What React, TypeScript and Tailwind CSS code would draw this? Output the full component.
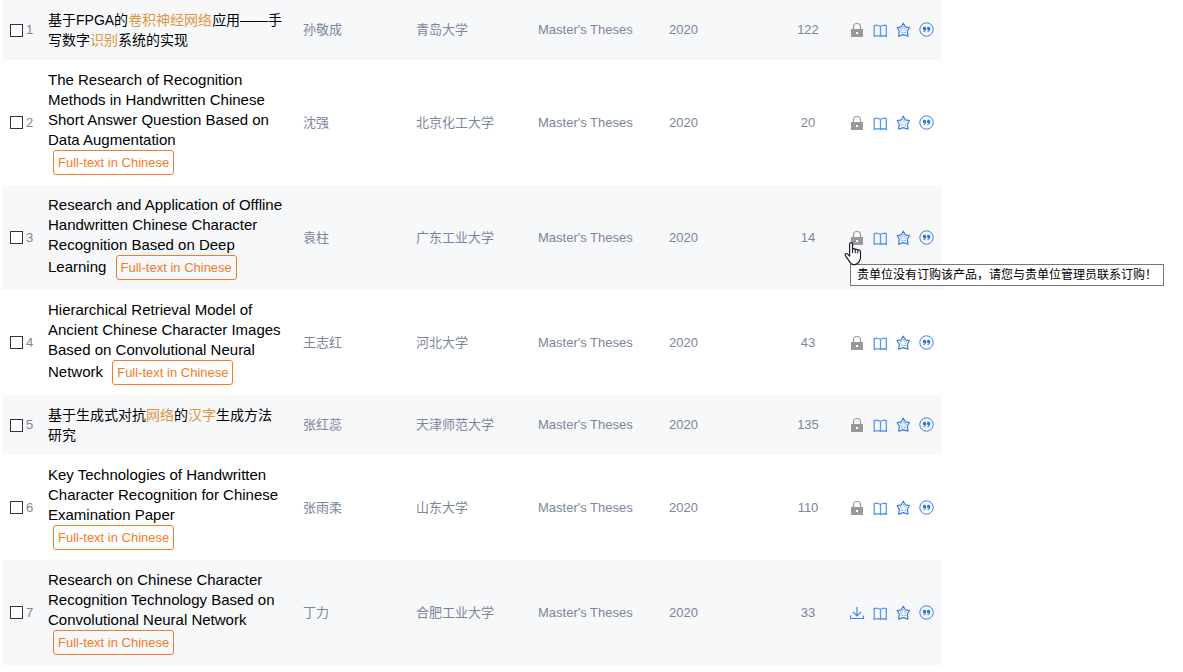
import type { ReactNode } from "react";

type Thesis = {
  id: number;
  lines: ReactNode[];
  translated?: boolean;
  badgeOnOwnLine?: boolean;
  author: string;
  school: string;
  downloads: number;
  open?: boolean;
  hint?: string;
};

function Hit({ children }: { children: ReactNode }) {
  return <em className="not-italic text-[#e0953f]">{children}</em>;
}

const theses: Thesis[] = [
  {
    id: 1,
    lines: [
      <>基于FPGA的<Hit>卷积神经网络</Hit>应用——手</>,
      <>写数字<Hit>识别</Hit>系统的实现</>,
    ],
    author: "孙敬成",
    school: "青岛大学",
    downloads: 122,
  },
  {
    id: 2,
    lines: [
      "The Research of Recognition",
      "Methods in Handwritten Chinese",
      "Short Answer Question Based on",
      "Data Augmentation",
    ],
    translated: true,
    badgeOnOwnLine: true,
    author: "沈强",
    school: "北京化工大学",
    downloads: 20,
  },
  {
    id: 3,
    lines: [
      "Research and Application of Offline",
      "Handwritten Chinese Character",
      "Recognition Based on Deep",
      "Learning",
    ],
    translated: true,
    author: "袁柱",
    school: "广东工业大学",
    downloads: 14,
    hint: "贵单位没有订购该产品，请您与贵单位管理员联系订购！",
  },
  {
    id: 4,
    lines: [
      "Hierarchical Retrieval Model of",
      "Ancient Chinese Character Images",
      "Based on Convolutional Neural",
      "Network",
    ],
    translated: true,
    author: "王志红",
    school: "河北大学",
    downloads: 43,
  },
  {
    id: 5,
    lines: [
      <>基于生成式对抗<Hit>网络</Hit>的<Hit>汉字</Hit>生成方法</>,
      "研究",
    ],
    author: "张红蕊",
    school: "天津师范大学",
    downloads: 135,
  },
  {
    id: 6,
    lines: [
      "Key Technologies of Handwritten",
      "Character Recognition for Chinese",
      "Examination Paper",
    ],
    translated: true,
    badgeOnOwnLine: true,
    author: "张雨柔",
    school: "山东大学",
    downloads: 110,
  },
  {
    id: 7,
    lines: [
      "Research on Chinese Character",
      "Recognition Technology Based on",
      "Convolutional Neural Network",
    ],
    translated: true,
    badgeOnOwnLine: true,
    author: "丁力",
    school: "合肥工业大学",
    downloads: 33,
    open: true,
  },
];

function LockIcon() {
  return (
    <svg viewBox="0 0 14 16" className="h-4 w-3.5" aria-hidden="true">
      <path d="M3.500 7.500V4.500C3.500 2.500 5 1.500 7 1.500s3.500 1 3.500 3v3" fill="none" stroke="#999" strokeWidth="1.200" />
      <path d="M1 7h12v8H1z" fill="#999" />
      <path d="M6 10h2v2H6z" fill="#fff" />
    </svg>
  );
}

function DownloadIcon() {
  return (
    <svg viewBox="0 0 14 16" className="h-4 w-3.5" fill="none" stroke="#4285ea" strokeWidth="1.2" aria-hidden="true">
      <path d="M7 2v9M3 7l4 4 4-4M.6 10.5v3h12.8v-3" />
    </svg>
  );
}

function BookIcon() {
  return (
    <svg viewBox="0 0 14 16" className="h-4 w-3.5" fill="none" stroke="#5a96f2" strokeWidth="1.300" aria-hidden="true">
      <path d="M7.500 4.500C6 3.200 2.500 3 1.200 3.600v10.700c1.800-.7 4.800-.6 6.300.2 1.500-.8 4-.9 5.800-.2V3.600c-1.300-.6-4.300-.4-5.800.9zM7.500 4.500v10" />
    </svg>
  );
}

function StarIcon() {
  return (
    <svg viewBox="0 0 14 16" className="h-4 w-3.5" fill="none" stroke="#3b7de6" strokeLinejoin="round" aria-hidden="true">
      <path strokeWidth="1.2" d="M7.300 1.200l2 3.600 4.100.9-2.100 3.500.7 4.900-4.700-1.500-4.700 1.500.7-4.900L1.200 5.700l4.100-.9z" />
      <path strokeWidth="0.8" strokeDasharray="1 1" d="M7.300 4.500l1.100 2 2.200.5-1.400 1.700.2 2.300-2.100-.8-2.100.8.2-2.300L4 7l2.200-.5z" />
    </svg>
  );
}

function QuoteIcon() {
  return (
    <svg viewBox="0 0 15 16" className="h-4 w-[15px] shrink-0" aria-hidden="true">
      <circle cx="7.5" cy="7.5" r="6.700" fill="none" stroke="#3b7de6" strokeWidth="1" />
      <path
        fill="#2f74e3"
        d="M5.400 4.800c1.100 0 1.800.8 1.800 2 0 1.700-1.100 3-2.800 3.500l-.3-.7c.9-.4 1.400-.9 1.500-1.600-1.100.1-1.800-.6-1.800-1.600 0-.9.700-1.600 1.600-1.600zM9.500 4.800c1.100 0 1.800.8 1.800 2 0 1.700-1.100 3-2.800 3.500l-.3-.7c.9-.4 1.400-.9 1.500-1.600-1.100.1-1.800-.6-1.800-1.600 0-.9.700-1.600 1.600-1.600z"
      />
    </svg>
  );
}

function HandCursor() {
  return (
    <svg viewBox="0 0 18 25" className="absolute top-3 -left-1.5 z-20 h-6 w-4.5" aria-hidden="true">
      <path
        d="M5.500 2.200c0-.9.600-1.500 1.500-1.500s1.500.6 1.500 1.500v5.600c.3-1.300 2.600-1.300 2.800.3.400-1 2.500-.8 2.700.7.600-.9 2.800-.6 2.800 1.200v6.200c0 1.600-.5 2.700-1.200 3.900-.8 1.700-2.400 3.400-4.800 3.400H9.600c-1.700 0-2.900-.9-3.700-2.300L1 13.900c-.7-1.500 1-2.500 2.200-1.500l2.300 2.400z"
        fill="#fff"
        stroke="#151525"
        strokeWidth="1.200"
        strokeLinejoin="round"
      />
      <path d="M8.500 7.500v4M11.300 8v3.700M14 8.800v3" fill="none" stroke="#151525" strokeWidth="1.100" />
    </svg>
  );
}

const iconButton = "flex w-3.5 cursor-pointer";

function Actions({ thesis }: { thesis: Thesis }) {
  return (
    <div className="relative flex gap-[9px]">
      <button type="button" aria-label={thesis.open ? "Download" : "Locked"} className={iconButton}>
        {thesis.open ? <DownloadIcon /> : <LockIcon />}
      </button>
      <button type="button" aria-label="Read online" className={iconButton}>
        <BookIcon />
      </button>
      <button type="button" aria-label="Add to favourites" className={iconButton}>
        <StarIcon />
      </button>
      <button type="button" aria-label="Cite" className={iconButton}>
        <QuoteIcon />
      </button>
      {thesis.hint && (
        <>
          <HandCursor />
          <div
            role="tooltip"
            className="absolute top-[34px] left-0 z-10 border border-[#767676] bg-white px-1.5 text-xs leading-5 whitespace-nowrap text-black"
          >
            {thesis.hint}
          </div>
        </>
      )}
    </div>
  );
}

function Title({ thesis }: { thesis: Thesis }) {
  const size = thesis.translated ? "text-[15px]/5" : "text-sm/5";
  return (
    <div className={`${size} whitespace-nowrap`}>
      <a href="#" className="text-black">
        {thesis.lines.map((line, i) => (
          <span key={i}>
            {i > 0 && <br />}
            {line}
          </span>
        ))}
      </a>
      {thesis.translated && (
        <>
          {thesis.badgeOnOwnLine ? <br /> : " "}
          <span className="ml-[5px] inline-block rounded-[3px] border border-[#f97a26] px-1 text-[13px]/[23px] text-[#f97a26]">
            Full-text in Chinese
          </span>
        </>
      )}
    </div>
  );
}

export default function App() {
  return (
    <main className="min-h-screen bg-white pl-0.5 font-['Liberation_Sans','Noto_Sans_CJK_SC',sans-serif]">
      <table className="w-full max-w-[940px] table-fixed border-collapse text-[13px] leading-5 text-[#7b869a]">
        <colgroup>
          <col className="w-[46px]" />
          <col className="w-[255px]" />
          <col className="w-[113px]" />
          <col className="w-[122px]" />
          <col className="w-[131px]" />
          <col className="w-[103px]" />
          <col className="w-[72px]" />
          <col className="w-[98px]" />
        </colgroup>
        <tbody>
          {theses.map((thesis) => (
            <tr key={thesis.id} className="odd:bg-[#f6f8fa]">
              <td className="py-2.5 pl-2">
                <label className="flex items-center gap-[3px]">
                  <input
                    type="checkbox"
                    className="size-[13px] shrink-0 appearance-none border border-[#333] bg-white"
                  />
                  {thesis.id}
                </label>
              </td>
              <td className="py-2.5">
                <Title thesis={thesis} />
              </td>
              <td>{thesis.author}</td>
              <td>{thesis.school}</td>
              <td>Master's Theses</td>
              <td>2020</td>
              <td className="text-center">{thesis.downloads}</td>
              <td className="pl-1.5">
                <Actions thesis={thesis} />
              </td>
            </tr>
          ))}
        </tbody>
      </table>
    </main>
  );
}
